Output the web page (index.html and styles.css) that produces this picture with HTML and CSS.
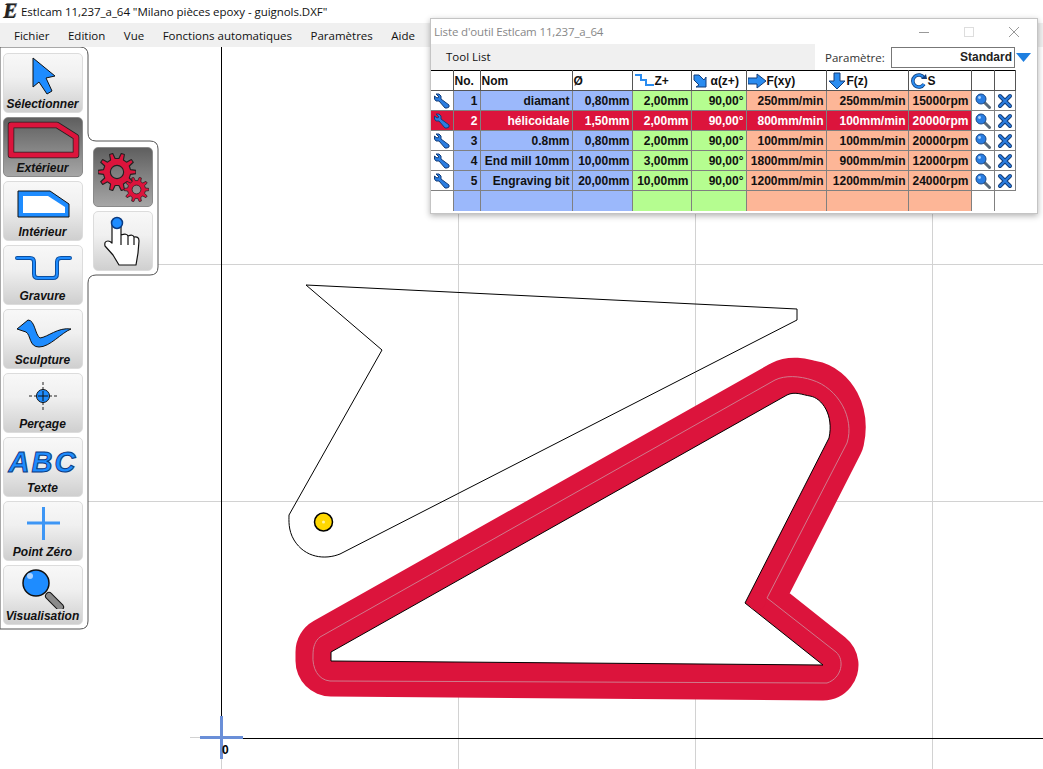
FILE: index.html
```html
<!DOCTYPE html>
<html lang="fr">
<head>
    <meta charset="UTF-8">
    <title>Estlcam 11,237_a_64</title>
    <link rel="stylesheet" href="styles.css">
</head>
<body>
    <svg class="defs" width="0" height="0">
        <symbol id="wrench" viewBox="0 0 16 16">
            <path d="M2 1 L5 1 L7 3 L7 6 L15 12 L15 14 L13 15 L11 15 L5 8 L2 8 L0.5 6 L0.5 3 L3 5 L5 4 Z" fill="#2a7de1" stroke="#123d7a" stroke-width="1" stroke-linejoin="round"/>
        </symbol>
        <symbol id="lens" viewBox="0 0 16 16">
            <path d="M9 9 L14.5 14.5" stroke="#5a6a78" stroke-width="3" stroke-linecap="round"/>
            <circle cx="6" cy="6" r="5" fill="#2a7de1" stroke="#164a8c"/>
            <circle cx="4.5" cy="4.5" r="1.4" fill="#a9d2ff"/>
        </symbol>
        <symbol id="cross" viewBox="0 0 16 16">
            <path d="M3 3 L13 13 M13 3 L3 13" stroke="#123d7a" stroke-width="4" stroke-linecap="round"/>
            <path d="M3 3 L13 13 M13 3 L3 13" stroke="#2a7de1" stroke-width="2" stroke-linecap="round"/>
        </symbol>
        <symbol id="gear" viewBox="-100 -100 200 200">
            <path fill-rule="evenodd" d="M70.9 -12.5 L99.6 -8.7 L99.6 8.7 L70.9 12.5 L64.7 31.6 L85.7 51.5 L75.5 65.6 L50 51.8 L33.8 63.6 L39.1 92.1 L22.5 97.4 L10 71.3 L-10 71.3 L-22.5 97.4 L-39.1 92.1 L-33.8 63.6 L-50 51.8 L-75.5 65.6 L-85.7 51.5 L-64.7 31.6 L-70.9 12.5 L-99.6 8.7 L-99.6 -8.7 L-70.9 -12.5 L-64.7 -31.6 L-85.7 -51.5 L-75.5 -65.6 L-50 -51.8 L-33.8 -63.6 L-39.1 -92.1 L-22.5 -97.4 L-10 -71.3 L10 -71.3 L22.5 -97.4 L39.1 -92.1 L33.8 -63.6 L50 -51.8 L75.5 -65.6 L85.7 -51.5 L64.7 -31.6 Z M35 0 A35 35 0 1 0 -35 0 A35 35 0 1 0 35 0 Z" fill="#dc143c" stroke="#222" stroke-width="6" stroke-linejoin="round"/>
        </symbol>
    </svg>

    <header class="titlebar">
        <span class="app-logo">E</span>
        <span class="app-title">Estlcam 11,237_a_64 "Milano pièces epoxy - guignols.DXF"</span>
    </header>

    <nav class="menubar">
        <span>Fichier</span>
        <span>Edition</span>
        <span>Vue</span>
        <span>Fonctions automatiques</span>
        <span>Paramètres</span>
        <span>Aide</span>
    </nav>

    <main class="workspace">
        <!-- canvas is 1043x722, drawing coords are page coords shifted by viewBox -->
        <svg class="canvas" viewBox="0 47 1043 722" width="1043" height="722">
            <g stroke="#d2d2d2" stroke-width="1">
                <path d="M458.5 47 V769 M695.5 47 V769 M932.5 47 V769"/>
                <path d="M0 264.5 H1043 M0 501.5 H1043"/>
                <path d="M190 737.5 H221 M221.5 738 V769"/>
            </g>
            <path d="M221.5 47 V738 M221 738.5 H1043" stroke="#000" stroke-width="1" fill="none"/>

            <path d="M306 285 L797 309 L797 320 L340 554 C325 560 305 558 294 540 C288 530 289 520 289 515 L382 350 Z" fill="none" stroke="#000" stroke-width="1"/>
            <circle cx="795" cy="430" r="9" fill="#fff" stroke="#000" stroke-width="1"/>
            <circle cx="323.500" cy="522" r="9" fill="#ffd800" stroke="#000" stroke-width="1.500"/>
            <circle cx="323.500" cy="522" r="1.500" fill="#fff3a0"/>

            <path class="cut-band" d="M331 652 L787 395 C795 391 803 395 810 396 C822 398 834 415 829 438 L745 603 L823 665 L331 661 Z"/>
            <path class="cut-hole" d="M331 652 L787 395 C795 391 803 395 810 396 C822 398 834 415 829 438 L745 603 L823 665 L331 661 Z"/>
            <circle cx="757" cy="601" r="9" fill="#dc143c"/>
            <path class="cut-center" d="M320 637 L775 380 C785 375 800 376 812 380 C838 388 855 418 847 443 L767 598 L836 652 C845 660 842 678 827 683 L330 681 C318 680 312 668 313 655 C313 647 315 641 320 637 Z"/>

            <path d="M200 737.5 H243 M221.500 716 V759" stroke="#6a8fd8" stroke-width="3" fill="none"/>
            <text x="222" y="754" class="origin-label">0</text>

            <path d="M0 47 H80 Q88 47 88 55 V133 Q88 141 96 141 H150 Q158 141 158 149 V267 Q158 275 150 275 H96 Q88 275 88 283 V621 Q88 629 80 629 H0 Z" fill="#fff" stroke="#555" stroke-width="1"/>
        </svg>

        <div class="tools">
            <div class="tool-rail">
                <div class="tool-btn">
                    <svg width="80" height="44"><path d="M30 5 L30 34 L36 29 L44 41 L49 38 L43 25 L52 23 Z" fill="#1e8cff" stroke="#111" stroke-width="1"/></svg>
                    <span>Sélectionner</span>
                </div>
                <div class="tool-btn active">
                    <svg width="80" height="44">
                        <path d="M8 8 L54 8 L73 20 L73 38 L8 38 Z" fill="none" stroke="#222" stroke-width="6.500" stroke-linejoin="round"/>
                        <path d="M8 8 L54 8 L73 20 L73 38 L8 38 Z" fill="none" stroke="#dc143c" stroke-width="5" stroke-linejoin="round"/>
                    </svg>
                    <span>Extérieur</span>
                </div>
                <div class="tool-btn">
                    <svg width="80" height="44">
                        <path d="M15 10 L47 10 L66 23 L66 36 L15 36 Z" fill="#1e8cff" stroke="#111" stroke-width="1"/>
                        <path d="M20 15 L45 15 L62 26 L62 32 L20 32 Z" fill="#fff"/>
                    </svg>
                    <span>Intérieur</span>
                </div>
                <div class="tool-btn">
                    <svg width="80" height="44">
                        <path d="M14 13 H27 Q31 13 31 17 V29 Q31 33 35 33 H50 Q54 33 54 29 V17 Q54 13 58 13 H67" fill="none" stroke="#0b4fa0" stroke-width="4" stroke-linecap="round"/>
                        <path d="M14 13 H27 Q31 13 31 17 V29 Q31 33 35 33 H50 Q54 33 54 29 V17 Q54 13 58 13 H67" fill="none" stroke="#1e8cff" stroke-width="2" stroke-linecap="round"/>
                    </svg>
                    <span>Gravure</span>
                </div>
                <div class="tool-btn">
                    <svg width="80" height="44"><path d="M14 20 L25 11 C32 11 32 26 37 29 C45 28 55 18 68 20 C58 24 47 38 36 38 C26 38 28 26 23 23 Z" fill="#1e8cff" stroke="#111" stroke-width="1"/></svg>
                    <span>Sculpture</span>
                </div>
                <div class="tool-btn">
                    <svg width="80" height="44">
                        <path d="M26 23 H54 M40 9 V37" stroke="#222" stroke-width="1" stroke-dasharray="3 2"/>
                        <circle cx="40" cy="23" r="6.500" fill="#1e8cff" stroke="#111"/>
                        <path d="M35 23 H45 M40 18 V28" stroke="#111" stroke-width="1"/>
                    </svg>
                    <span>Perçage</span>
                </div>
                <div class="tool-btn">
                    <svg width="80" height="44"><text x="40" y="35" text-anchor="middle" class="abc">ABC</text></svg>
                    <span>Texte</span>
                </div>
                <div class="tool-btn">
                    <svg width="80" height="44"><path d="M24 22 H57 M40.500 6 V39" stroke="#3d96f5" stroke-width="3"/></svg>
                    <span>Point Zéro</span>
                </div>
                <div class="tool-btn">
                    <svg width="80" height="44">
                        <path d="M46 31 L57 42" stroke="#111" stroke-width="8" stroke-linecap="round"/>
                        <path d="M46 31 L57 42" stroke="#8a8a8a" stroke-width="6" stroke-linecap="round"/>
                        <circle cx="33" cy="18" r="13" fill="#1e8cff" stroke="#111" stroke-width="1.500"/>
                        <circle cx="27" cy="11" r="3" fill="#a9d2ff"/>
                    </svg>
                    <span>Visualisation</span>
                </div>
            </div>
            <div class="sub-rail">
                <div class="tool-btn active square">
                    <svg width="60" height="60">
                        <use href="#gear" x="5" y="6" width="38" height="38"/>
                        <use href="#gear" x="31" y="30" width="25" height="25"/>
                    </svg>
                </div>
                <div class="tool-btn square">
                    <svg width="60" height="60">
                        <path d="M19 32 V15 Q19 11 23.500 11 Q28 11 28 15 V24 Q34 22 35 25 Q40 23 41 26 Q46 25 46 30 L45 42 L43 54 H26 L20 44 L12 35 Q11 30 15 30 Q17 30 19 32 Z M28 24 V34 M35 25 V34 M41 26 V34" fill="#fff" stroke="#111" stroke-width="1.200" stroke-linejoin="round"/>
                        <circle cx="24" cy="12" r="5.500" fill="#1e8cff" stroke="#0b3a80" stroke-width="1.500"/>
                    </svg>
                </div>
            </div>
        </div>
    </main>

    <section class="tool-window">
        <div class="win-title">
            <span class="win-caption">Liste d'outil Estlcam 11,237_a_64</span>
            <svg class="win-controls" width="102" height="12">
                <path d="M1 6.500 H11" stroke="#999"/>
                <rect x="46.500" y="1.500" width="9" height="9" fill="none" stroke="#ddd"/>
                <path d="M91 1 L101 11 M101 1 L91 11" stroke="#999"/>
            </svg>
        </div>
        <div class="win-menu">
            <span class="win-menu-item">Tool List</span>
            <div class="param">
                <label>Paramètre:</label>
                <div class="param-input">Standard</div>
                <svg width="15" height="9"><path d="M0 0 H15 L7.500 9 Z" fill="#1e7fe0"/></svg>
            </div>
        </div>
        <table class="tool-table">
            <colgroup>
                <col class="c-icon"><col class="c-no"><col class="c-name"><col class="c-dia"><col class="c-z"><col class="c-a"><col class="c-fxy"><col class="c-fz"><col class="c-s"><col class="c-view"><col class="c-del">
            </colgroup>
            <thead>
                <tr>
                    <th></th>
                    <th>No.</th>
                    <th>Nom</th>
                    <th>Ø</th>
                    <th><div class="th-icon"><svg width="20" height="16"><path d="M1 2 H7 V7 H12 V12 H20" fill="none" stroke="#2a8cf0" stroke-width="2"/></svg>Z+</div></th>
                    <th><div class="th-icon"><svg width="17" height="16"><path d="M1 2 H6 L11 7 L13 4 V14 H3 L6 12 L1 7 Z" fill="#2a8cf0" stroke="#123d7a"/></svg>α(z+)</div></th>
                    <th><div class="th-icon"><svg width="18" height="16"><path d="M0 5 H9 V1 L18 8 L9 15 V11 H0 Z" fill="#2a8cf0" stroke="#123d7a"/></svg>F(xy)</div></th>
                    <th><div class="th-icon"><svg width="18" height="18"><path d="M6 1 H12 V9 H17 L9 17 L1 9 H6 Z" fill="#2a8cf0" stroke="#123d7a"/></svg>F(z)</div></th>
                    <th><div class="th-icon"><svg width="17" height="16"><path d="M14 11 A6 6 0 1 1 14 5" fill="none" stroke="#123d7a" stroke-width="3.500"/><path d="M14 11 A6 6 0 1 1 14 5" fill="none" stroke="#2a8cf0" stroke-width="2"/><path d="M11 6 L17 6 L16 1 Z" fill="#123d7a"/></svg>S</div></th>
                    <th></th>
                    <th></th>
                </tr>
            </thead>
            <tbody>
                <tr>
                    <td class="ico"><svg width="16" height="16"><use href="#wrench"/></svg></td>
                    <td class="blue">1</td><td class="blue">diamant</td><td class="blue">0,80mm</td>
                    <td class="green">2,00mm</td><td class="green">90,00°</td>
                    <td class="orange">250mm/min</td><td class="orange">250mm/min</td><td class="orange">15000rpm</td>
                    <td class="ico"><svg width="16" height="16"><use href="#lens"/></svg></td>
                    <td class="ico"><svg width="16" height="16"><use href="#cross"/></svg></td>
                </tr>
                <tr class="selected">
                    <td class="ico"><svg width="16" height="16"><use href="#wrench"/></svg></td>
                    <td>2</td><td>hélicoidale</td><td>1,50mm</td>
                    <td>2,00mm</td><td>90,00°</td>
                    <td>800mm/min</td><td>100mm/min</td><td>20000rpm</td>
                    <td class="ico"><svg width="16" height="16"><use href="#lens"/></svg></td>
                    <td class="ico"><svg width="16" height="16"><use href="#cross"/></svg></td>
                </tr>
                <tr>
                    <td class="ico"><svg width="16" height="16"><use href="#wrench"/></svg></td>
                    <td class="blue">3</td><td class="blue">0.8mm</td><td class="blue">0,80mm</td>
                    <td class="green">2,00mm</td><td class="green">90,00°</td>
                    <td class="orange">100mm/min</td><td class="orange">100mm/min</td><td class="orange">20000rpm</td>
                    <td class="ico"><svg width="16" height="16"><use href="#lens"/></svg></td>
                    <td class="ico"><svg width="16" height="16"><use href="#cross"/></svg></td>
                </tr>
                <tr>
                    <td class="ico"><svg width="16" height="16"><use href="#wrench"/></svg></td>
                    <td class="blue">4</td><td class="blue">End mill 10mm</td><td class="blue">10,00mm</td>
                    <td class="green">3,00mm</td><td class="green">90,00°</td>
                    <td class="orange">1800mm/min</td><td class="orange">900mm/min</td><td class="orange">12000rpm</td>
                    <td class="ico"><svg width="16" height="16"><use href="#lens"/></svg></td>
                    <td class="ico"><svg width="16" height="16"><use href="#cross"/></svg></td>
                </tr>
                <tr>
                    <td class="ico"><svg width="16" height="16"><use href="#wrench"/></svg></td>
                    <td class="blue">5</td><td class="blue">Engraving bit</td><td class="blue">20,00mm</td>
                    <td class="green">10,00mm</td><td class="green">90,00°</td>
                    <td class="orange">1200mm/min</td><td class="orange">1200mm/min</td><td class="orange">24000rpm</td>
                    <td class="ico"><svg width="16" height="16"><use href="#lens"/></svg></td>
                    <td class="ico"><svg width="16" height="16"><use href="#cross"/></svg></td>
                </tr>
                <tr class="empty">
                    <td></td>
                    <td class="blue"></td><td class="blue"></td><td class="blue"></td>
                    <td class="green"></td><td class="green"></td>
                    <td class="orange"></td><td class="orange"></td><td class="orange"></td>
                    <td></td><td></td>
                </tr>
            </tbody>
        </table>
    </section>
</body>
</html>
```

FILE: styles.css
```css
* {
    box-sizing: border-box;
}
html, body {
    height: 100%;
}
body {
    margin: 0;
    display: flex;
    flex-direction: column;
    overflow: hidden;
    position: relative;
    background: #fff;
    color: #111;
    font-family: "Open Sans", "Noto Sans", sans-serif;
    font-size: 11.5px;
}
.defs {
    position: absolute;
}

/* main window chrome */
.titlebar {
    height: 23px;
    display: flex;
    align-items: center;
    padding-left: 3px;
    background: #fff;
}
.app-logo {
    width: 18px;
    font: italic bold 21px "Liberation Serif", serif;
    color: #222;
    text-shadow: 1px -1px 0 #777;
}
.app-title {
    letter-spacing: -0.05px;
}
.menubar {
    height: 24px;
    display: flex;
    align-items: center;
    gap: 18.5px;
    padding-left: 14px;
    background: #f0f0f0;
}

/* drawing area */
.workspace {
    flex: 1;
    position: relative;
    overflow: hidden;
}
.canvas {
    position: absolute;
    left: 0;
    top: 0;
    display: block;
}
.cut-band {
    fill: none;
    stroke: #dc143c;
    stroke-width: 71;
    stroke-linejoin: round;
}
.cut-hole {
    fill: #fff;
    stroke: #000;
    stroke-width: 1;
}
.cut-center {
    fill: none;
    stroke: #d07a8c;
    stroke-width: 1;
}
.origin-label {
    font: bold 12px "Liberation Sans", sans-serif;
    fill: #000;
}

/* left tool buttons */
.tools {
    position: absolute;
    left: 3px;
    top: 6px;
    display: flex;
    gap: 10px;
    align-items: flex-start;
}
.tool-rail, .sub-rail {
    display: flex;
    flex-direction: column;
    gap: 4px;
}
.sub-rail {
    margin-top: 94px;
}
.tool-btn {
    width: 80px;
    height: 60px;
    display: flex;
    flex-direction: column;
    align-items: center;
    border: 1px solid #dcdcdc;
    border-radius: 5px;
    background: linear-gradient(#f8f8f8, #f0f0f0 40%, #cfcfcf);
    font: italic bold 12px "Liberation Sans", sans-serif;
    color: #111;
}
.tool-btn svg {
    flex: none;
    margin: -1px;
}
.tool-btn span {
    line-height: 14px;
    margin-top: 1px;
    margin-left: -1px;
}
.tool-btn.active {
    border-color: #8a8a8a;
    background: linear-gradient(#5f5f5f, #a6a6a6);
}
.tool-btn.square {
    width: 60px;
}
.abc {
    font: italic bold 29px "Liberation Sans", sans-serif;
    letter-spacing: 2px;
    fill: #1e8cff;
    stroke: #0b3a80;
    stroke-width: 1;
}

/* tool list window */
.tool-window {
    position: absolute;
    left: 430px;
    top: 18px;
    width: 608px;
    height: 196px;
    background: #fff;
    border: 1px solid #c4c4c4;
    box-shadow: 0 2px 6px rgba(0, 0, 0, 0.3);
}
.win-title {
    height: 25px;
    display: flex;
    align-items: center;
    justify-content: space-between;
    padding: 0 17px 0 3px;
    color: #888;
}
.win-caption {
    letter-spacing: -0.15px;
}
.win-menu {
    height: 26px;
    display: flex;
    align-items: center;
    justify-content: space-between;
    background: #f0f0f0;
    padding-left: 15px;
}
.win-menu-item {
    padding-bottom: 2px;
}
.param {
    display: flex;
    align-items: center;
    height: 26px;
    padding: 0 6px 0 10px;
    background: #fff;
    color: #333;
}
.param label {
    width: 66px;
}
.param-input {
    width: 124px;
    height: 21px;
    border: 1px solid #777;
    text-align: right;
    padding-right: 2px;
    font: bold 12px/19px "Liberation Sans", sans-serif;
    color: #222;
    margin-right: 1px;
}
.tool-table {
    table-layout: fixed;
    width: 584px;
    border-collapse: collapse;
    font: bold 12px "Liberation Sans", sans-serif;
    color: #111;
}
.c-icon { width: 22px; }
.c-no { width: 27px; }
.c-name { width: 92px; }
.c-dia { width: 60px; }
.c-z { width: 59px; }
.c-a { width: 55px; }
.c-fxy { width: 80px; }
.c-fz { width: 82px; }
.c-s { width: 63px; }
.c-view { width: 23px; }
.c-del { width: 21px; }
.tool-table th, .tool-table td {
    height: 20px;
    padding: 0 2px 0 0;
    border: 1px solid #808080;
    white-space: nowrap;
    overflow: hidden;
}
.tool-table tr > :first-child {
    border-left: 0;
}
.tool-table th {
    border-color: #555;
    border-top-color: #000;
    text-align: left;
    padding-left: 1px;
}
.tool-table td {
    text-align: right;
}
.tool-table .ico {
    text-align: center;
    padding: 0;
    line-height: 0;
}
.tool-table tr.empty td {
    height: 20px;
    border-bottom: 0;
}
.tool-table tr.empty td:nth-child(n+10) {
    border-right: 0;
}
.th-icon {
    display: flex;
    align-items: center;
    gap: 1px;
}
.blue { background: #9bb8fb; }
.green { background: #b5fd90; }
.orange { background: #fdb697; }
.selected td {
    background: #dc143c;
    color: #fff;
}
.selected .ico:nth-child(n+10) {
    background: #fff;
}
```
